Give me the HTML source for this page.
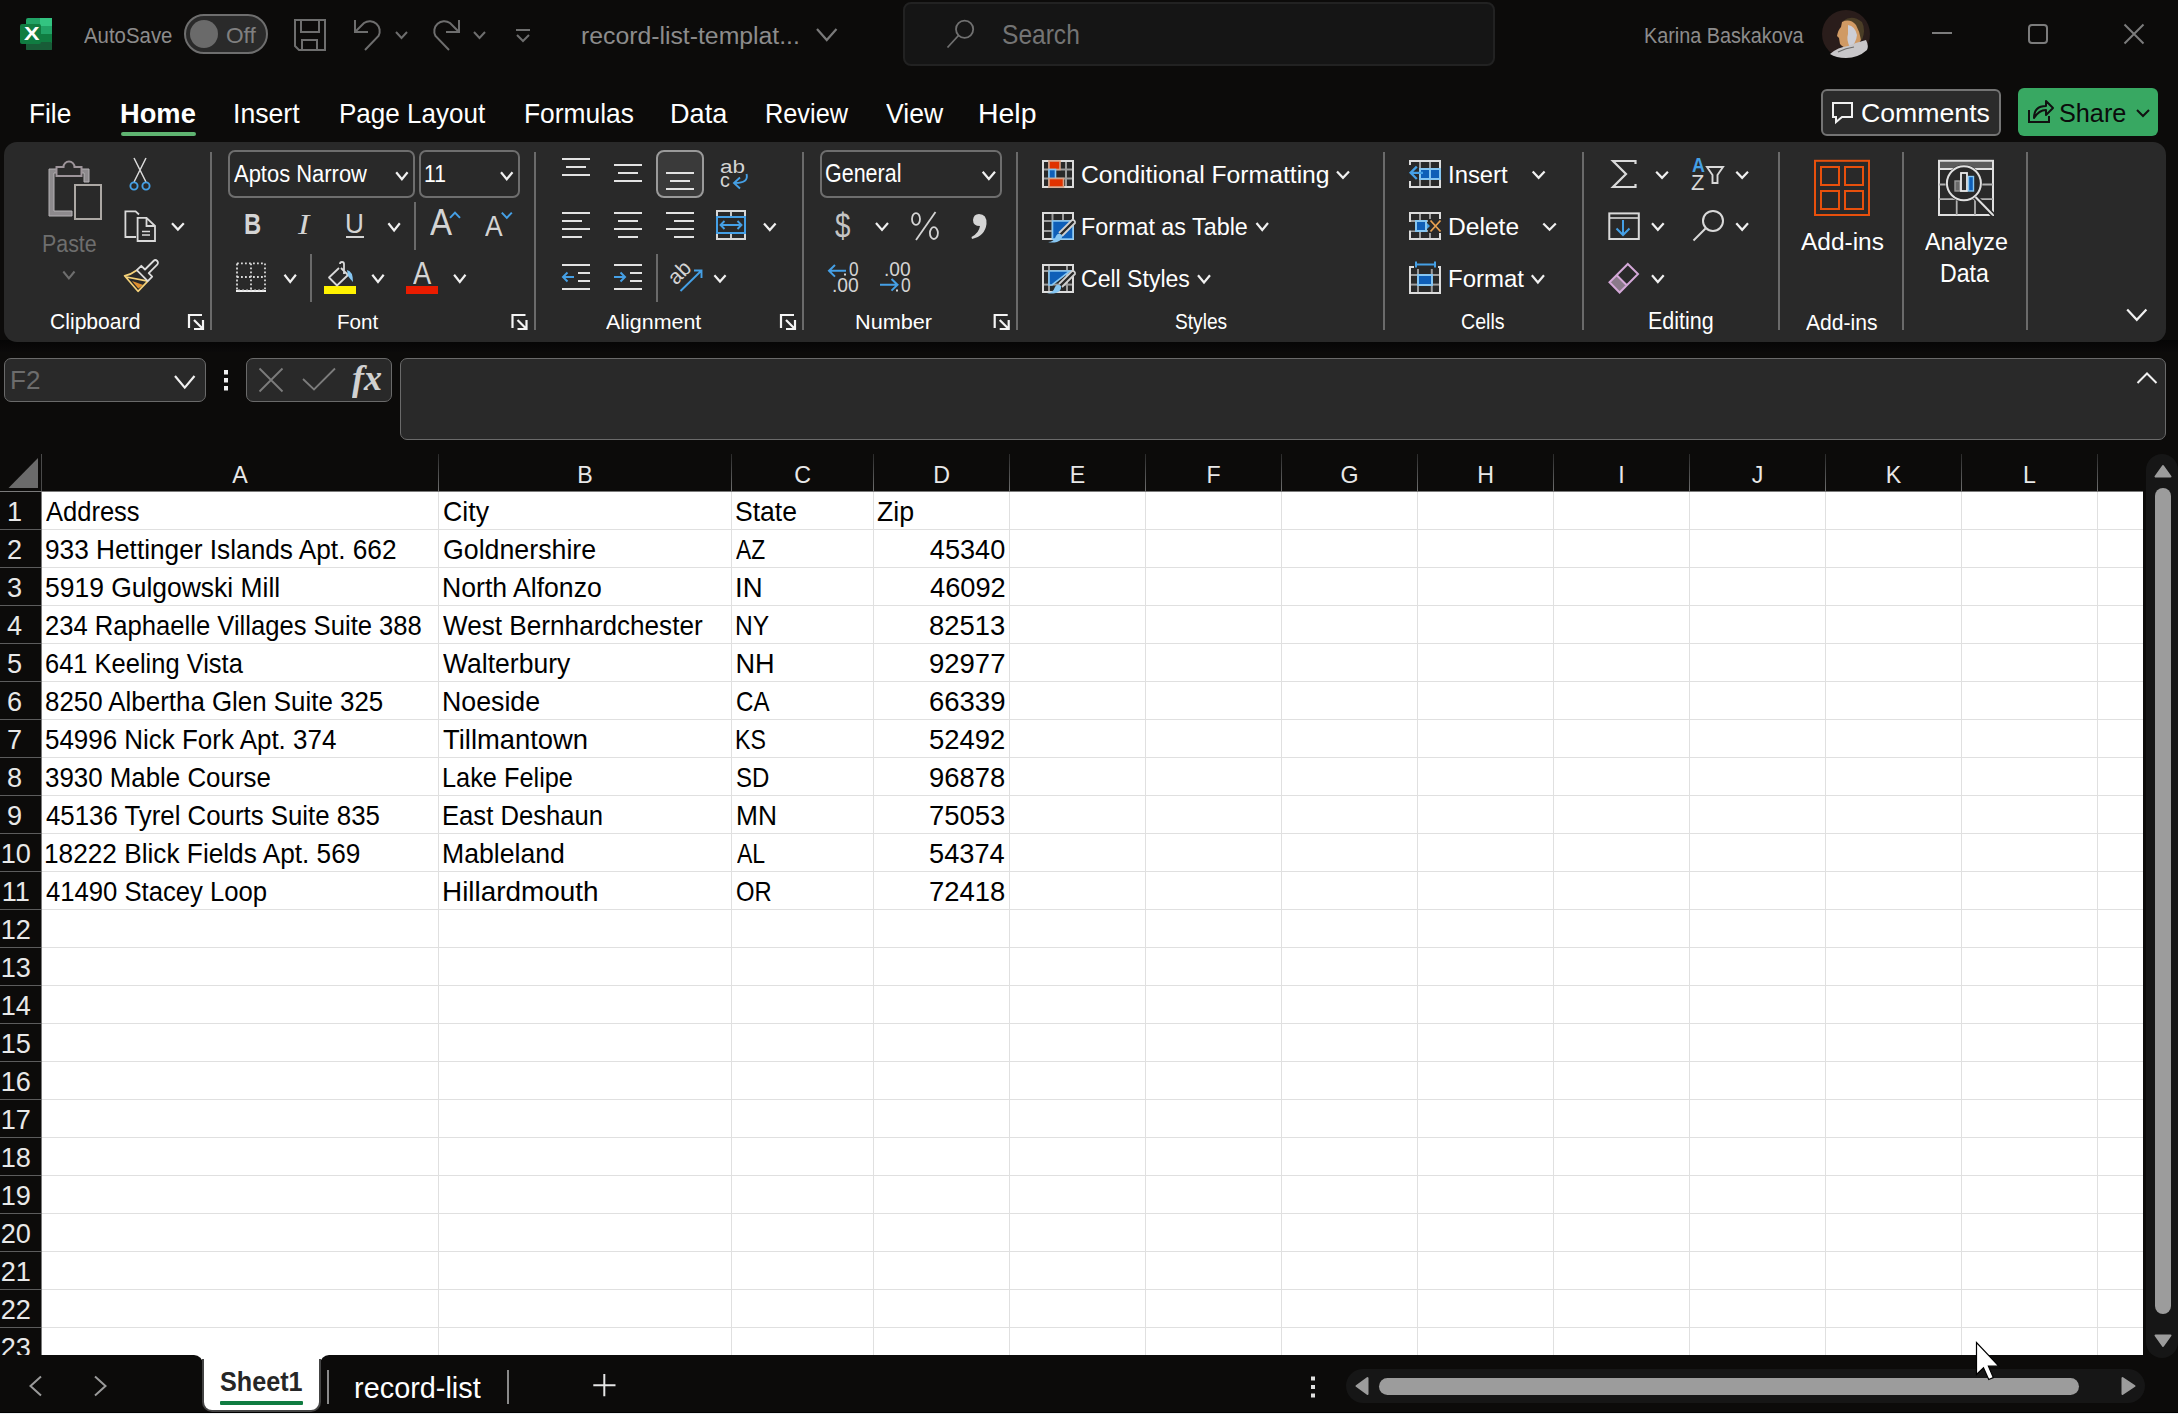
<!DOCTYPE html>
<html><head><meta charset="utf-8"><style>
html,body{margin:0;padding:0;}
body{width:2178px;height:1414px;overflow:hidden;position:relative;background:#0c0b0a;font-family:"Liberation Sans",sans-serif;}
.r{position:absolute;}
.t{position:absolute;white-space:nowrap;transform-origin:0 0;}
</style></head><body>
<div class="r" style="left:903px;top:2px;width:592px;height:64px;background:#151515;border:2px solid #222222;box-sizing:border-box;border-radius:8px;"></div>
<div class="r" style="left:121px;top:132px;width:75px;height:4px;background:#5fb471;border-radius:2px;"></div>
<div class="r" style="left:1821px;top:89px;width:180px;height:47px;background:#2b2b2b;border:2px solid #747474;box-sizing:border-box;border-radius:6px;"></div>
<div class="r" style="left:2018px;top:88px;width:140px;height:48px;background:#38a862;border-radius:6px;"></div>
<div class="r" style="left:0px;top:340px;width:2178px;height:12px;background:linear-gradient(#050505,#0b0a0a);"></div>
<div class="r" style="left:4px;top:142px;width:2162px;height:200px;background:#292929;border-radius:13px;"></div>
<div class="r" style="left:210px;top:152px;width:2px;height:178px;background:#6a6a6a;"></div>
<div class="r" style="left:228px;top:150px;width:187px;height:48px;background:#292929;border:2px solid #6e6e6e;box-sizing:border-box;border-radius:7px;"></div>
<div class="r" style="left:419px;top:150px;width:101px;height:48px;background:#292929;border:2px solid #6e6e6e;box-sizing:border-box;border-radius:7px;"></div>
<div class="r" style="left:346px;top:236px;width:18px;height:2.2px;background:#d4d4d4;"></div>
<div class="r" style="left:414px;top:202px;width:2px;height:48px;background:#6a6a6a;"></div>
<div class="r" style="left:236px;top:289.6px;width:30px;height:2.4px;background:#f0f0f0;"></div>
<div class="r" style="left:310px;top:254px;width:2px;height:48px;background:#6a6a6a;"></div>
<div class="r" style="left:324px;top:286px;width:32px;height:8px;background:#fff200;"></div>
<div class="r" style="left:406px;top:286px;width:32px;height:8px;background:#ea1c00;"></div>
<div class="r" style="left:534px;top:152px;width:2px;height:178px;background:#6a6a6a;"></div>
<div class="r" style="left:562px;top:157.9px;width:28px;height:2.2px;background:#e2e2e2;"></div>
<div class="r" style="left:566px;top:165.9px;width:20px;height:2.2px;background:#e2e2e2;"></div>
<div class="r" style="left:562px;top:173.9px;width:28px;height:2.2px;background:#e2e2e2;"></div>
<div class="r" style="left:614px;top:163.9px;width:28px;height:2.2px;background:#e2e2e2;"></div>
<div class="r" style="left:618px;top:171.9px;width:20px;height:2.2px;background:#e2e2e2;"></div>
<div class="r" style="left:614px;top:179.9px;width:28px;height:2.2px;background:#e2e2e2;"></div>
<div class="r" style="left:656px;top:150px;width:48px;height:48px;background:#3a3a3a;border:2px solid #9a9a9a;box-sizing:border-box;border-radius:8px;"></div>
<div class="r" style="left:666px;top:171.9px;width:28px;height:2.2px;background:#e2e2e2;"></div>
<div class="r" style="left:670px;top:179.9px;width:20px;height:2.2px;background:#e2e2e2;"></div>
<div class="r" style="left:666px;top:187.9px;width:28px;height:2.2px;background:#e2e2e2;"></div>
<div class="r" style="left:562px;top:211.9px;width:28px;height:2.2px;background:#e2e2e2;"></div>
<div class="r" style="left:562px;top:219.9px;width:20px;height:2.2px;background:#e2e2e2;"></div>
<div class="r" style="left:562px;top:227.9px;width:28px;height:2.2px;background:#e2e2e2;"></div>
<div class="r" style="left:562px;top:235.9px;width:20px;height:2.2px;background:#e2e2e2;"></div>
<div class="r" style="left:614px;top:211.9px;width:28px;height:2.2px;background:#e2e2e2;"></div>
<div class="r" style="left:618px;top:219.9px;width:20px;height:2.2px;background:#e2e2e2;"></div>
<div class="r" style="left:614px;top:227.9px;width:28px;height:2.2px;background:#e2e2e2;"></div>
<div class="r" style="left:618px;top:235.9px;width:20px;height:2.2px;background:#e2e2e2;"></div>
<div class="r" style="left:666px;top:211.9px;width:28px;height:2.2px;background:#e2e2e2;"></div>
<div class="r" style="left:674px;top:219.9px;width:20px;height:2.2px;background:#e2e2e2;"></div>
<div class="r" style="left:666px;top:227.9px;width:28px;height:2.2px;background:#e2e2e2;"></div>
<div class="r" style="left:674px;top:235.9px;width:20px;height:2.2px;background:#e2e2e2;"></div>
<div class="r" style="left:562px;top:263.9px;width:28px;height:2.2px;background:#e2e2e2;"></div>
<div class="r" style="left:578px;top:271.9px;width:12px;height:2.2px;background:#e2e2e2;"></div>
<div class="r" style="left:578px;top:279.9px;width:12px;height:2.2px;background:#e2e2e2;"></div>
<div class="r" style="left:562px;top:287.9px;width:28px;height:2.2px;background:#e2e2e2;"></div>
<div class="r" style="left:614px;top:263.9px;width:28px;height:2.2px;background:#e2e2e2;"></div>
<div class="r" style="left:630px;top:271.9px;width:12px;height:2.2px;background:#e2e2e2;"></div>
<div class="r" style="left:630px;top:279.9px;width:12px;height:2.2px;background:#e2e2e2;"></div>
<div class="r" style="left:614px;top:287.9px;width:28px;height:2.2px;background:#e2e2e2;"></div>
<div class="r" style="left:656px;top:254px;width:2px;height:48px;background:#6a6a6a;"></div>
<div class="r" style="left:802px;top:152px;width:2px;height:178px;background:#6a6a6a;"></div>
<div class="r" style="left:820px;top:150px;width:182px;height:48px;background:#292929;border:2px solid #6e6e6e;box-sizing:border-box;border-radius:7px;"></div>
<div class="r" style="left:1016px;top:152px;width:2px;height:178px;background:#6a6a6a;"></div>
<div class="r" style="left:1383px;top:152px;width:2px;height:178px;background:#6a6a6a;"></div>
<div class="r" style="left:1582px;top:152px;width:2px;height:178px;background:#6a6a6a;"></div>
<div class="r" style="left:1778px;top:152px;width:2px;height:178px;background:#6a6a6a;"></div>
<div class="r" style="left:1902px;top:152px;width:2px;height:178px;background:#6a6a6a;"></div>
<div class="r" style="left:2026px;top:152px;width:2px;height:178px;background:#6a6a6a;"></div>
<div class="r" style="left:4px;top:358px;width:202px;height:44px;background:#292929;border:1px solid #6a6a6a;box-sizing:border-box;border-radius:7px;"></div>
<div class="r" style="left:246px;top:358px;width:146px;height:44px;background:#292929;border:1px solid #6a6a6a;box-sizing:border-box;border-radius:7px;"></div>
<div class="r" style="left:400px;top:358px;width:1766px;height:82px;background:#292929;border:1px solid #6a6a6a;box-sizing:border-box;border-radius:7px;"></div>
<div class="r" style="left:42px;top:492px;width:2101px;height:863px;background:#ffffff;"></div>
<div class="r" style="left:438px;top:454px;width:1px;height:37px;background:linear-gradient(#2a2a2a,#6e6e6e);"></div>
<div class="r" style="left:438px;top:492px;width:1px;height:863px;background:#e0e0e0;"></div>
<div class="r" style="left:731px;top:454px;width:1px;height:37px;background:linear-gradient(#2a2a2a,#6e6e6e);"></div>
<div class="r" style="left:731px;top:492px;width:1px;height:863px;background:#e0e0e0;"></div>
<div class="r" style="left:873px;top:454px;width:1px;height:37px;background:linear-gradient(#2a2a2a,#6e6e6e);"></div>
<div class="r" style="left:873px;top:492px;width:1px;height:863px;background:#e0e0e0;"></div>
<div class="r" style="left:1009px;top:454px;width:1px;height:37px;background:linear-gradient(#2a2a2a,#6e6e6e);"></div>
<div class="r" style="left:1009px;top:492px;width:1px;height:863px;background:#e0e0e0;"></div>
<div class="r" style="left:1145px;top:454px;width:1px;height:37px;background:linear-gradient(#2a2a2a,#6e6e6e);"></div>
<div class="r" style="left:1145px;top:492px;width:1px;height:863px;background:#e0e0e0;"></div>
<div class="r" style="left:1281px;top:454px;width:1px;height:37px;background:linear-gradient(#2a2a2a,#6e6e6e);"></div>
<div class="r" style="left:1281px;top:492px;width:1px;height:863px;background:#e0e0e0;"></div>
<div class="r" style="left:1417px;top:454px;width:1px;height:37px;background:linear-gradient(#2a2a2a,#6e6e6e);"></div>
<div class="r" style="left:1417px;top:492px;width:1px;height:863px;background:#e0e0e0;"></div>
<div class="r" style="left:1553px;top:454px;width:1px;height:37px;background:linear-gradient(#2a2a2a,#6e6e6e);"></div>
<div class="r" style="left:1553px;top:492px;width:1px;height:863px;background:#e0e0e0;"></div>
<div class="r" style="left:1689px;top:454px;width:1px;height:37px;background:linear-gradient(#2a2a2a,#6e6e6e);"></div>
<div class="r" style="left:1689px;top:492px;width:1px;height:863px;background:#e0e0e0;"></div>
<div class="r" style="left:1825px;top:454px;width:1px;height:37px;background:linear-gradient(#2a2a2a,#6e6e6e);"></div>
<div class="r" style="left:1825px;top:492px;width:1px;height:863px;background:#e0e0e0;"></div>
<div class="r" style="left:1961px;top:454px;width:1px;height:37px;background:linear-gradient(#2a2a2a,#6e6e6e);"></div>
<div class="r" style="left:1961px;top:492px;width:1px;height:863px;background:#e0e0e0;"></div>
<div class="r" style="left:2097px;top:454px;width:1px;height:37px;background:linear-gradient(#2a2a2a,#6e6e6e);"></div>
<div class="r" style="left:2097px;top:492px;width:1px;height:863px;background:#e0e0e0;"></div>
<div class="r" style="left:41px;top:454px;width:1px;height:37px;background:#4a4a4a;"></div>
<div class="r" style="left:41px;top:491px;width:1px;height:864px;background:#7a7a7a;"></div>
<div class="r" style="left:0px;top:491px;width:2143px;height:1px;background:#7a7a7a;"></div>
<div class="r" style="left:0px;top:529px;width:41px;height:1px;background:#5c5c5c;"></div>
<div class="r" style="left:42px;top:529px;width:2101px;height:1px;background:#e0e0e0;"></div>
<div class="r" style="left:0px;top:567px;width:41px;height:1px;background:#5c5c5c;"></div>
<div class="r" style="left:42px;top:567px;width:2101px;height:1px;background:#e0e0e0;"></div>
<div class="r" style="left:0px;top:605px;width:41px;height:1px;background:#5c5c5c;"></div>
<div class="r" style="left:42px;top:605px;width:2101px;height:1px;background:#e0e0e0;"></div>
<div class="r" style="left:0px;top:643px;width:41px;height:1px;background:#5c5c5c;"></div>
<div class="r" style="left:42px;top:643px;width:2101px;height:1px;background:#e0e0e0;"></div>
<div class="r" style="left:0px;top:681px;width:41px;height:1px;background:#5c5c5c;"></div>
<div class="r" style="left:42px;top:681px;width:2101px;height:1px;background:#e0e0e0;"></div>
<div class="r" style="left:0px;top:719px;width:41px;height:1px;background:#5c5c5c;"></div>
<div class="r" style="left:42px;top:719px;width:2101px;height:1px;background:#e0e0e0;"></div>
<div class="r" style="left:0px;top:757px;width:41px;height:1px;background:#5c5c5c;"></div>
<div class="r" style="left:42px;top:757px;width:2101px;height:1px;background:#e0e0e0;"></div>
<div class="r" style="left:0px;top:795px;width:41px;height:1px;background:#5c5c5c;"></div>
<div class="r" style="left:42px;top:795px;width:2101px;height:1px;background:#e0e0e0;"></div>
<div class="r" style="left:0px;top:833px;width:41px;height:1px;background:#5c5c5c;"></div>
<div class="r" style="left:42px;top:833px;width:2101px;height:1px;background:#e0e0e0;"></div>
<div class="r" style="left:0px;top:871px;width:41px;height:1px;background:#5c5c5c;"></div>
<div class="r" style="left:42px;top:871px;width:2101px;height:1px;background:#e0e0e0;"></div>
<div class="r" style="left:0px;top:909px;width:41px;height:1px;background:#5c5c5c;"></div>
<div class="r" style="left:42px;top:909px;width:2101px;height:1px;background:#e0e0e0;"></div>
<div class="r" style="left:0px;top:947px;width:41px;height:1px;background:#5c5c5c;"></div>
<div class="r" style="left:42px;top:947px;width:2101px;height:1px;background:#e0e0e0;"></div>
<div class="r" style="left:0px;top:985px;width:41px;height:1px;background:#5c5c5c;"></div>
<div class="r" style="left:42px;top:985px;width:2101px;height:1px;background:#e0e0e0;"></div>
<div class="r" style="left:0px;top:1023px;width:41px;height:1px;background:#5c5c5c;"></div>
<div class="r" style="left:42px;top:1023px;width:2101px;height:1px;background:#e0e0e0;"></div>
<div class="r" style="left:0px;top:1061px;width:41px;height:1px;background:#5c5c5c;"></div>
<div class="r" style="left:42px;top:1061px;width:2101px;height:1px;background:#e0e0e0;"></div>
<div class="r" style="left:0px;top:1099px;width:41px;height:1px;background:#5c5c5c;"></div>
<div class="r" style="left:42px;top:1099px;width:2101px;height:1px;background:#e0e0e0;"></div>
<div class="r" style="left:0px;top:1137px;width:41px;height:1px;background:#5c5c5c;"></div>
<div class="r" style="left:42px;top:1137px;width:2101px;height:1px;background:#e0e0e0;"></div>
<div class="r" style="left:0px;top:1175px;width:41px;height:1px;background:#5c5c5c;"></div>
<div class="r" style="left:42px;top:1175px;width:2101px;height:1px;background:#e0e0e0;"></div>
<div class="r" style="left:0px;top:1213px;width:41px;height:1px;background:#5c5c5c;"></div>
<div class="r" style="left:42px;top:1213px;width:2101px;height:1px;background:#e0e0e0;"></div>
<div class="r" style="left:0px;top:1251px;width:41px;height:1px;background:#5c5c5c;"></div>
<div class="r" style="left:42px;top:1251px;width:2101px;height:1px;background:#e0e0e0;"></div>
<div class="r" style="left:0px;top:1289px;width:41px;height:1px;background:#5c5c5c;"></div>
<div class="r" style="left:42px;top:1289px;width:2101px;height:1px;background:#e0e0e0;"></div>
<div class="r" style="left:0px;top:1327px;width:41px;height:1px;background:#5c5c5c;"></div>
<div class="r" style="left:42px;top:1327px;width:2101px;height:1px;background:#e0e0e0;"></div>
<div class="r" style="left:180px;top:1355px;width:160px;height:12px;background:#ffffff;"></div>
<div class="r" style="left:0px;top:1355px;width:203px;height:59px;background:#0c0b0a;border-radius:0 9px 0 0;"></div>
<div class="r" style="left:320px;top:1355px;width:1858px;height:59px;background:#0c0b0a;border-radius:9px 0 0 0;"></div>
<div class="r" style="left:2146px;top:454px;width:32px;height:904px;background:#161616;border-radius:16px;"></div>
<div class="r" style="left:2155px;top:488px;width:16px;height:826px;background:#9c9c9c;border-radius:8px;"></div>
<div class="r" style="left:202px;top:1359px;width:119px;height:53px;background:#ffffff;border-radius:0 0 10px 10px;border:2px solid #444444;border-top:none;box-sizing:border-box;"></div>
<div class="r" style="left:220px;top:1401px;width:83px;height:4px;background:#107c41;border-radius:1px;"></div>
<div class="r" style="left:327px;top:1370px;width:2px;height:34px;background:#8a8a8a;"></div>
<div class="r" style="left:507px;top:1370px;width:2px;height:34px;background:#8a8a8a;"></div>
<div class="r" style="left:1346px;top:1369px;width:799px;height:34px;background:#161616;border-radius:17px;"></div>
<div class="r" style="left:1379px;top:1378px;width:700px;height:17px;background:#9c9c9c;border-radius:8.5px;"></div>
<div class="r" style="left:0px;top:1412px;width:2178px;height:1px;background:#000000;"></div>
<div class="r" style="left:0px;top:1413px;width:2178px;height:1px;background:#eef1f3;"></div>
<svg class="r" style="left:0;top:0" width="2178" height="1414" viewBox="0 0 2178 1414">
<rect x="26" y="18" width="26" height="32" rx="2" fill="#21a366"/><rect x="40" y="18" width="12" height="8" fill="#33c481"/><rect x="26" y="34" width="26" height="8" fill="#107c41"/><rect x="26" y="42" width="26" height="8" rx="1" fill="#185c37"/><rect x="20" y="24" width="21" height="20" rx="2" fill="#107c41"/>
<rect x="185" y="15" width="82" height="38" rx="19" fill="#2a2a2a" stroke="#6e6e6e" stroke-width="2"/>
<circle cx="204" cy="34" r="14" fill="#6a6a6a"/>
<path d="M295,20 H325 V50 H299 L295,46 Z" fill="none" stroke="#6e6e6e" stroke-width="2"/><path d="M301,20 V32 H319 V20" fill="none" stroke="#6e6e6e" stroke-width="2"/><path d="M302,50 V40 H317 V50" fill="none" stroke="#6e6e6e" stroke-width="2"/>
<path d="M355,20 V32 H368" fill="none" stroke="#6e6e6e" stroke-width="2"/><path d="M356,31 L364,23 A10,10 0 0 1 378.5,36 L365,50" fill="none" stroke="#6e6e6e" stroke-width="2"/>
<polyline points="396,32 401.5,38 407,32" fill="none" stroke="#6e6e6e" stroke-width="2"/>
<path d="M459,20 V32 H446" fill="none" stroke="#6e6e6e" stroke-width="2"/><path d="M458,31 L450,23 A10,10 0 0 0 435.5,36 L449,50" fill="none" stroke="#6e6e6e" stroke-width="2"/>
<polyline points="474,32 479.5,38 485,32" fill="none" stroke="#6e6e6e" stroke-width="2"/>
<line x1="516" y1="30" x2="530" y2="30" stroke="#6e6e6e" stroke-width="2" stroke-linecap="butt"/>
<polyline points="517,35 523.0,41 529,35" fill="none" stroke="#6e6e6e" stroke-width="2"/>
<polyline points="817,29 826.75,40 836.5,29" fill="none" stroke="#7a7a7a" stroke-width="2.2"/>
<circle cx="964.6" cy="29.2" r="8.6" fill="none" stroke="#707070" stroke-width="1.8"/><line x1="958.5" y1="35.5" x2="947.5" y2="47.5" stroke="#707070" stroke-width="1.8"/>
<circle cx="1846" cy="34" r="24" fill="#2a1d1b"/><path d="M1843,21 Q1852,14 1862,22 Q1866,30 1862,40 L1856,36 Q1855,26 1846,24 Z" fill="#4a3d26"/><path d="M1842,22 Q1850,18 1856,25 Q1860,32 1861,40 Q1858,46 1850,49 Q1843,48 1840,44 L1839,38 L1837,36 Q1838,30 1841,27 Z" fill="#d09a64"/><path d="M1848,25 Q1855,26 1857,35 Q1856,44 1850,47 Q1846,40 1848,34 Z" fill="#cdced6"/><path d="M1830,54 Q1838,47 1848,46 Q1858,42 1866,40 Q1869,46 1867,50 Q1858,58 1846,58 Q1836,58 1830,54 Z" fill="#c9c7c9"/><path d="M1838,52 Q1846,48 1854,47" fill="none" stroke="#6a6a6a" stroke-width="1.2"/>
<line x1="1932" y1="33" x2="1952" y2="33" stroke="#7c7c7c" stroke-width="2" stroke-linecap="butt"/>
<rect x="2029" y="25" width="18" height="18" rx="3" fill="none" stroke="#7c7c7c" stroke-width="2"/>
<path d="M2124.5,24.5 L2143.5,43.5 M2143.5,24.5 L2124.5,43.5" stroke="#7c7c7c" stroke-width="2"/>
<path d="M1833,103 H1852 V117 H1842 L1836,122 V117 H1833 Z" fill="none" stroke="#f0f0f0" stroke-width="2" stroke-linejoin="miter"/>
<path d="M2029,110 V122 H2049 V116" fill="none" stroke="#111" stroke-width="2"/><path d="M2034,118 Q2034,106 2046,106 V101 L2053,108 L2046,115 V110 Q2039,110 2034,118 Z" fill="none" stroke="#111" stroke-width="2" stroke-linejoin="round"/>
<polyline points="2137,110 2143.0,116 2149,110" fill="none" stroke="#111" stroke-width="2"/>
<path d="M49,169 H57 V176 H81 V169 H89 V182 H84 V173 H54 V211 H72 V216 H49 Z" fill="#8d8a8d" stroke="#b4b1b4" stroke-width="1"/>
<path d="M56.5,176 V167 H63.5 A5.5,5.5 0 0 1 74.5,167 H81.5 V176 Z" fill="#2b2b2b" stroke="#9d949a" stroke-width="2"/>
<rect x="75" y="185" width="26" height="34" fill="none" stroke="#aca8a4" stroke-width="2"/>
<polyline points="63.3,271.5 68.9,278.4 74.5,271.5" fill="none" stroke="#6e6e6e" stroke-width="2"/>
<path d="M134,158 L146,182 M146,158 L134,182" stroke="#d9d9d9" stroke-width="1.5"/>
<circle cx="134" cy="186" r="3.6" fill="#292929" stroke="#45a0e6" stroke-width="1.9"/><circle cx="146" cy="186" r="3.6" fill="#292929" stroke="#45a0e6" stroke-width="1.9"/>
<path d="M136,237 H125.4 V211.4 H135.6 L139,214.5" fill="none" stroke="#d9d9d9" stroke-width="1.8"/>
<path d="M137.6,217.8 H146.5 L155,226 V241 H137.6 Z M146.5,217.8 V226 H155" fill="none" stroke="#d9d9d9" stroke-width="1.8"/>
<path d="M142,231.5 H150 M142,235 H150" stroke="#d9d9d9" stroke-width="1.4"/>
<polyline points="172,223.2 177.9,229.6 183.8,223.2" fill="none" stroke="#f0f0f0" stroke-width="2.2"/>
<path d="M132,281 L143.3,285 L138.3,288.5 Z" fill="#e09030"/>
<path d="M136.8,270.2 Q131,274.5 124.6,275.8 L138,291.3 L147.8,281.2 M126.5,277 L147.8,281.2" fill="none" stroke="#f5d27a" stroke-width="1.7" stroke-linejoin="round"/>
<path d="M136.8,270.2 L141.3,265.8 L145,269.5 L153.5,261 A2.6,2.6 0 0 1 157.2,264.7 L148.7,273.2 L152.2,276.7 L147.8,281.2 Z" fill="#292929" stroke="#dcdcdc" stroke-width="1.8" stroke-linejoin="round"/>
<path d="M189,328 V315 H202" fill="none" stroke="#f4f4f4" stroke-width="2.2"/>
<path d="M194,320 L202,328 M203,320 V329 H194" fill="none" stroke="#f4f4f4" stroke-width="2.2"/>
<polyline points="396.2,172.3 401.9,179.2 407.6,172.3" fill="none" stroke="#f0f0f0" stroke-width="2.2"/>
<polyline points="501,172.3 506.75,179.2 512.5,172.3" fill="none" stroke="#f0f0f0" stroke-width="2.2"/>
<polyline points="388.4,223.3 394.1,230.4 399.8,223.3" fill="none" stroke="#f0f0f0" stroke-width="2.2"/>
<polyline points="450,217.9 455.0,212.6 460,217.9" fill="none" stroke="#45a0e6" stroke-width="2"/>
<polyline points="501.8,212.6 506.8,217.9 511.8,212.6" fill="none" stroke="#45a0e6" stroke-width="2"/>
<rect x="237" y="263.4" width="28" height="27" fill="none" stroke="#d9d9d9" stroke-width="1.8" stroke-dasharray="1.8,2.2"/>
<line x1="251" y1="263.4" x2="251" y2="290" stroke="#d9d9d9" stroke-width="1.8" stroke-dasharray="1.8,2.2"/><line x1="237" y1="277" x2="265" y2="277" stroke="#d9d9d9" stroke-width="1.8" stroke-dasharray="1.8,2.2"/>
<polyline points="284.5,274.8 290.2,282 295.9,274.8" fill="none" stroke="#f0f0f0" stroke-width="2.2"/>
<path d="M340,264 A2,2 0 0 1 344,264 V274 M339,268 L329,277.5 L337,285.5 L348,275 L341,268" fill="none" stroke="#d9d9d9" stroke-width="1.8" stroke-linejoin="round"/>
<path d="M347,270 Q353,271 353,282 Q350,279 348,276 Z" fill="#86c6f2"/>
<polyline points="372.3,274.8 378.0,282 383.7,274.8" fill="none" stroke="#f0f0f0" stroke-width="2.2"/>
<polyline points="454.1,274.8 459.8,282 465.5,274.8" fill="none" stroke="#f0f0f0" stroke-width="2.2"/>
<path d="M512.5,328 V315 H525.5" fill="none" stroke="#f4f4f4" stroke-width="2.2"/>
<path d="M517.5,320 L525.5,328 M526.5,320 V329 H517.5" fill="none" stroke="#f4f4f4" stroke-width="2.2"/>
<path d="M746.5,174 Q749,183 735,183 M740,177.5 L734,183 L740,188.5" fill="none" stroke="#45a0e6" stroke-width="1.9"/>
<rect x="717" y="211" width="28" height="28" fill="none" stroke="#d9d9d9" stroke-width="2"/><line x1="731" y1="211" x2="731" y2="217" stroke="#d9d9d9" stroke-width="1.8"/><line x1="731" y1="233" x2="731" y2="239" stroke="#d9d9d9" stroke-width="1.8"/><rect x="717" y="217" width="28" height="16" fill="#292929" stroke="#45a0e6" stroke-width="2"/><path d="M720.5,225 H741.5 M724.5,221 L720.5,225 L724.5,229 M737.5,221 L741.5,225 L737.5,229" fill="none" stroke="#45a0e6" stroke-width="1.9"/>
<polyline points="764,223.4 769.8,230 775.6,223.4" fill="none" stroke="#f0f0f0" stroke-width="2.2"/>
<path d="M574,277 H563.5 M567.5,272.5 L563,277 L567.5,281.5" fill="none" stroke="#45a0e6" stroke-width="2"/>
<path d="M614,277 H624.5 M620.5,272.5 L625,277 L620.5,281.5" fill="none" stroke="#45a0e6" stroke-width="2"/>
<path d="M680.5,291 L701.5,270.5 M694,270.5 H701.5 V278" fill="none" stroke="#45a0e6" stroke-width="1.9"/>
<polyline points="714.4,275.3 720.0,281.6 725.6,275.3" fill="none" stroke="#f0f0f0" stroke-width="2.2"/>
<path d="M781,328 V315 H794" fill="none" stroke="#f4f4f4" stroke-width="2.2"/>
<path d="M786,320 L794,328 M795,320 V329 H786" fill="none" stroke="#f4f4f4" stroke-width="2.2"/>
<polyline points="982.7,171.7 988.85,179 995,171.7" fill="none" stroke="#f0f0f0" stroke-width="2.2"/>
<polyline points="876,223 882.0,229.9 888,223" fill="none" stroke="#f0f0f0" stroke-width="2.2"/>
<ellipse cx="916" cy="219" rx="4" ry="5.9" fill="none" stroke="#d4d4d4" stroke-width="1.8"/><ellipse cx="933.9" cy="233.1" rx="4" ry="5.9" fill="none" stroke="#d4d4d4" stroke-width="1.8"/><line x1="935.5" y1="212" x2="916" y2="240" stroke="#d4d4d4" stroke-width="1.8"/>
<path d="M979,214 Q987,214 986.5,224 Q985,236 972,239 L971.5,237 Q979,233 980,226 Q973,226 973,220 Q973.5,214 979,214 Z" fill="#d4d4d4"/>
<path d="M846,270.8 H829.5 M835,265 L829,270.8 L835,276.6" fill="none" stroke="#45a0e6" stroke-width="2"/>
<rect x="844" y="273.5" width="2" height="2" fill="#d4d4d4"/>
<path d="M880,284.8 H897 M891.5,279 L897.5,284.8 L891.5,290.6" fill="none" stroke="#45a0e6" stroke-width="2"/>
<rect x="896" y="289.5" width="2" height="2" fill="#d4d4d4"/>
<path d="M994.7,328 V315 H1007.7" fill="none" stroke="#f4f4f4" stroke-width="2.2"/>
<path d="M999.7,320 L1007.7,328 M1008.7,320 V329 H999.7" fill="none" stroke="#f4f4f4" stroke-width="2.2"/>
<line x1="1049" y1="161" x2="1049" y2="187" stroke="#9c9c9c" stroke-width="2"/>
<line x1="1066" y1="161" x2="1066" y2="187" stroke="#9c9c9c" stroke-width="2"/>
<line x1="1043" y1="169.5" x2="1073" y2="169.5" stroke="#9c9c9c" stroke-width="2"/>
<line x1="1043" y1="178.5" x2="1073" y2="178.5" stroke="#9c9c9c" stroke-width="2"/>
<rect x="1043" y="161" width="30" height="26" fill="none" stroke="#dcdcdc" stroke-width="2"/>
<rect x="1049" y="161" width="11" height="8.5" fill="#e03200" stroke="#d8a184" stroke-width="1.6"/><rect x="1049" y="169.5" width="6.5" height="9" fill="#0f5fb8" stroke="#86c6f2" stroke-width="1.6"/><rect x="1049" y="178.5" width="14.5" height="8.5" fill="#e03200" stroke="#d8a184" stroke-width="1.6"/>
<polyline points="1337,171.4 1343.0,177.8 1349,171.4" fill="none" stroke="#f0f0f0" stroke-width="2.2"/>
<line x1="1052.5" y1="213" x2="1052.5" y2="239" stroke="#9c9c9c" stroke-width="2"/>
<line x1="1063" y1="213" x2="1063" y2="239" stroke="#9c9c9c" stroke-width="2"/>
<line x1="1043" y1="221" x2="1073" y2="221" stroke="#9c9c9c" stroke-width="2"/>
<line x1="1043" y1="231" x2="1073" y2="231" stroke="#9c9c9c" stroke-width="2"/>
<rect x="1043" y="213" width="30" height="26" fill="none" stroke="#dcdcdc" stroke-width="2"/>
<path d="M1052.5,221 H1073 V239 H1052.5 Z" fill="#0f5fb8" stroke="#86c6f2" stroke-width="1.6"/>
<path d="M1059,233 L1072,220 A2.5,2.5 0 0 1 1075,223 L1062,236" fill="#292929" stroke="#cfcfcf" stroke-width="1.8"/>
<path d="M1048,242 Q1054,242 1056,236 Q1058,232 1062,235 Q1063,240 1057,242 Q1052,243 1048,242 Z" fill="#86c6f2"/>
<polyline points="1256.5,223 1262.25,230 1268,223" fill="none" stroke="#f0f0f0" stroke-width="2.2"/>
<line x1="1049" y1="265" x2="1049" y2="292" stroke="#9c9c9c" stroke-width="2"/>
<line x1="1067" y1="265" x2="1067" y2="292" stroke="#9c9c9c" stroke-width="2"/>
<line x1="1043" y1="271" x2="1073" y2="271" stroke="#9c9c9c" stroke-width="2"/>
<line x1="1043" y1="284.6" x2="1073" y2="284.6" stroke="#9c9c9c" stroke-width="2"/>
<rect x="1043" y="265" width="30" height="27" fill="none" stroke="#dcdcdc" stroke-width="2"/>
<path d="M1049,271 H1070 L1052,285 H1049 Z" fill="#0f5fb8" stroke="#86c6f2" stroke-width="1.6"/>
<path d="M1059,284 L1072,271 A2.5,2.5 0 0 1 1075,274 L1062,287" fill="#292929" stroke="#cfcfcf" stroke-width="1.8"/>
<path d="M1047,293 Q1053,293 1055,287 Q1057,283 1061,286 Q1062,291 1056,293 Q1051,294 1047,293 Z" fill="#86c6f2"/>
<polyline points="1198,275.3 1204.0,282.5 1210,275.3" fill="none" stroke="#f0f0f0" stroke-width="2.2"/>
<line x1="1420" y1="161" x2="1420" y2="187" stroke="#9c9c9c" stroke-width="2"/>
<line x1="1430" y1="161" x2="1430" y2="187" stroke="#9c9c9c" stroke-width="2"/>
<line x1="1410" y1="169" x2="1440" y2="169" stroke="#9c9c9c" stroke-width="2"/>
<line x1="1410" y1="178" x2="1440" y2="178" stroke="#9c9c9c" stroke-width="2"/>
<rect x="1410" y="161" width="30" height="26" fill="none" stroke="#dcdcdc" stroke-width="2"/>
<rect x="1420" y="169" width="20" height="10" fill="#0f5fb8" stroke="#86c6f2" stroke-width="2"/><line x1="1430" y1="169" x2="1430" y2="179" stroke="#86c6f2" stroke-width="2"/><rect x="1407.5" y="165" width="11.5" height="16" fill="#292929"/><path d="M1423,172.8 H1411 M1416.8,166.6 L1410.6,172.8 L1416.8,179" fill="none" stroke="#45a0e6" stroke-width="2.3"/>
<polyline points="1532.7,171.4 1538.65,177.8 1544.6,171.4" fill="none" stroke="#f0f0f0" stroke-width="2.2"/>
<line x1="1420" y1="213" x2="1420" y2="239" stroke="#9c9c9c" stroke-width="2"/>
<line x1="1430" y1="213" x2="1430" y2="239" stroke="#9c9c9c" stroke-width="2"/>
<line x1="1410" y1="221" x2="1440" y2="221" stroke="#9c9c9c" stroke-width="2"/>
<line x1="1410" y1="231" x2="1440" y2="231" stroke="#9c9c9c" stroke-width="2"/>
<rect x="1410" y="213" width="30" height="26" fill="none" stroke="#dcdcdc" stroke-width="2"/>
<rect x="1428" y="219" width="14" height="14" fill="#292929"/><rect x="1407" y="222" width="8" height="8.5" fill="#292929"/><rect x="1416" y="221" width="10" height="10" fill="#0f5fb8" stroke="#86c6f2" stroke-width="2"/><path d="M1427,223 L1430,226 L1427,229 Z" fill="#45a0e6"/><path d="M1430.5,220.5 L1440.5,231.5 M1440.5,220.5 L1430.5,231.5" stroke="#e8a050" stroke-width="1.8"/>
<polyline points="1543.3,223.4 1549.55,229.8 1555.8,223.4" fill="none" stroke="#f0f0f0" stroke-width="2.2"/>
<line x1="1418" y1="267" x2="1418" y2="293" stroke="#9c9c9c" stroke-width="2"/>
<line x1="1431.8" y1="267" x2="1431.8" y2="293" stroke="#9c9c9c" stroke-width="2"/>
<line x1="1410" y1="275" x2="1440" y2="275" stroke="#9c9c9c" stroke-width="2"/>
<line x1="1410" y1="284.6" x2="1440" y2="284.6" stroke="#9c9c9c" stroke-width="2"/>
<rect x="1410" y="267" width="30" height="26" fill="none" stroke="#dcdcdc" stroke-width="2"/>
<rect x="1414" y="262" width="24" height="7" fill="#292929"/><path d="M1416,264.5 H1435 M1416,261.5 V267.5 M1435,261.5 V267.5" fill="none" stroke="#45a0e6" stroke-width="2"/><rect x="1418" y="275" width="14" height="10" fill="#0f5fb8" stroke="#86c6f2" stroke-width="2"/>
<polyline points="1531.8,275.3 1537.9,282.5 1544,275.3" fill="none" stroke="#f0f0f0" stroke-width="2.2"/>
<path d="M1635.5,164 V161 H1613 L1626,174 L1613,187 H1635.5 V184" fill="none" stroke="#d9d9d9" stroke-width="2.2"/>
<polyline points="1656.2,171.8 1662.0500000000002,177.8 1667.9,171.8" fill="none" stroke="#f0f0f0" stroke-width="2.2"/>
<path d="M1707,167 H1723 L1717.5,175 V183 H1712.5 V175 Z" fill="none" stroke="#d9d9d9" stroke-width="1.9" stroke-linejoin="miter"/>
<polyline points="1736.3,171.8 1742.15,177.8 1748,171.8" fill="none" stroke="#f0f0f0" stroke-width="2.2"/>
<rect x="1609.3" y="213.4" width="29.5" height="25.6" fill="none" stroke="#d9d9d9" stroke-width="2"/><line x1="1609.3" y1="218" x2="1638.8" y2="218" stroke="#d9d9d9" stroke-width="1.6"/><path d="M1623,220 V235 M1616.5,228.5 L1623,235 L1629.5,228.5" fill="none" stroke="#45a0e6" stroke-width="2"/>
<polyline points="1652,223.2 1657.85,229.8 1663.7,223.2" fill="none" stroke="#f0f0f0" stroke-width="2.2"/>
<circle cx="1713" cy="220.9" r="10" fill="none" stroke="#d9d9d9" stroke-width="2"/><line x1="1705.5" y1="228.5" x2="1693.5" y2="240.5" stroke="#d9d9d9" stroke-width="2"/>
<polyline points="1736.3,223.2 1742.15,229.8 1748,223.2" fill="none" stroke="#f0f0f0" stroke-width="2.2"/>
<path d="M1617,275.5 L1626,285 L1619.5,292 L1609.5,282 Z" fill="#8a7a8a"/><path d="M1627.8,264 L1638,274 L1619.6,292.5 L1609.5,282.3 Z M1617,275.5 L1626.5,285" fill="none" stroke="#d4a8d8" stroke-width="2"/>
<polyline points="1652,275.2 1657.85,282 1663.7,275.2" fill="none" stroke="#f0f0f0" stroke-width="2.2"/>
<rect x="1815" y="160.8" width="54" height="54.2" fill="none" stroke="#e8500c" stroke-width="2"/><rect x="1821" y="167" width="18" height="18" fill="none" stroke="#e8500c" stroke-width="2"/><rect x="1845" y="167" width="18" height="18" fill="none" stroke="#e8500c" stroke-width="2"/><rect x="1821" y="191" width="18" height="18" fill="none" stroke="#e8500c" stroke-width="2"/><rect x="1845" y="191" width="18" height="18" fill="none" stroke="#e8500c" stroke-width="2"/>
<rect x="1939" y="160.8" width="54" height="54.2" fill="none" stroke="#e0e0e0" stroke-width="2"/><rect x="1940" y="162" width="52" height="6" fill="#5c5c5c"/><line x1="1939" y1="169" x2="1993" y2="169" stroke="#e0e0e0" stroke-width="1.8"/><line x1="1939" y1="184.5" x2="1993" y2="184.5" stroke="#b0b0b0" stroke-width="1.8"/><line x1="1939" y1="199.2" x2="1993" y2="199.2" stroke="#b0b0b0" stroke-width="1.8"/><line x1="1956.7" y1="199" x2="1956.7" y2="215" stroke="#b0b0b0" stroke-width="1.8"/><line x1="1975" y1="199" x2="1975" y2="215" stroke="#b0b0b0" stroke-width="1.8"/><circle cx="1963.9" cy="183.3" r="18.5" fill="#292929"/><circle cx="1963.9" cy="183.3" r="17" fill="none" stroke="#e0e0e0" stroke-width="2"/><line x1="1975.5" y1="197" x2="1993" y2="215" stroke="#292929" stroke-width="5"/><line x1="1975.5" y1="197" x2="1993" y2="215" stroke="#e0e0e0" stroke-width="2"/><rect x="1955" y="181" width="5" height="10" fill="#6a6a6a" stroke="#9a9a9a" stroke-width="1.4"/><rect x="1961" y="173" width="6" height="18" fill="#2b2b2b" stroke="#ececec" stroke-width="1.8"/><rect x="1968.5" y="176.5" width="5" height="14.5" fill="#0f5fb8" stroke="#86c6f2" stroke-width="1.4"/>
<polyline points="2127.2,309.4 2136.8,319.8 2146.4,309.4" fill="none" stroke="#f0f0f0" stroke-width="2.2"/>
<polyline points="175,376 184.75,387.6 194.5,376" fill="none" stroke="#f0f0f0" stroke-width="2.2"/>
<rect x="224" y="370" width="4" height="4.5" fill="#f0f0f0"/><rect x="224" y="378" width="4" height="4.5" fill="#f0f0f0"/><rect x="224" y="386" width="4" height="4.5" fill="#f0f0f0"/>
<path d="M259.5,368.5 L282.5,391.5 M282.5,368.5 L259.5,391.5" stroke="#7c7c7c" stroke-width="1.8"/>
<polyline points="303,379 314,389.5 335,368.5" fill="none" stroke="#7c7c7c" stroke-width="1.8"/>
<polyline points="2137.5,383 2147,373.5 2156.5,383" fill="none" stroke="#f0f0f0" stroke-width="2"/>
<polygon points="8.5,488 38,488 38,458" fill="#6b6b6b"/>
<polygon points="2163,466 2155.5,476.5 2170.5,476.5" fill="#9c9c9c" stroke="#9c9c9c" stroke-width="2" stroke-linejoin="round"/><polygon points="2163,1346 2155.5,1335.5 2170.5,1335.5" fill="#9c9c9c" stroke="#9c9c9c" stroke-width="2" stroke-linejoin="round"/>
<polyline points="41,1376.5 30.5,1386 41,1395.5" fill="none" stroke="#9a9a9a" stroke-width="2"/><polyline points="95,1376.5 105.5,1386 95,1395.5" fill="none" stroke="#9a9a9a" stroke-width="2"/>
<path d="M604.3,1374 V1396.3 M593.3,1385.2 H615.5" stroke="#e6e6e6" stroke-width="2"/>
<rect x="1311" y="1376.5" width="4" height="4" fill="#e0e0e0"/><rect x="1311" y="1385" width="4" height="4" fill="#e0e0e0"/><rect x="1311" y="1393.5" width="4" height="4" fill="#e0e0e0"/>
<polygon points="1356.5,1386 1367.5,1378 1367.5,1394" fill="#9c9c9c" stroke="#9c9c9c" stroke-width="2" stroke-linejoin="round"/><polygon points="2134.5,1386 2122.5,1378 2122.5,1394" fill="#9c9c9c" stroke="#9c9c9c" stroke-width="2" stroke-linejoin="round"/>
<path d="M1976.5,1342.5 V1374.5 L1983.5,1367.8 L1988.7,1379.5 L1993.3,1377.6 L1988.4,1366.2 H1998.8 Z" fill="#ffffff" stroke="#000" stroke-width="1.2" stroke-linejoin="miter"/>
</svg>
<div class="t" style="left:23.77px;top:24.95px;font-size:18.41px;line-height:18.41px;color:#ffffff;font-weight:700;transform:scaleX(1.2635);">X</div>
<div class="t" style="left:84.00px;top:24.72px;font-size:22.46px;line-height:22.46px;color:#8c8c8c;transform:scaleX(0.9080);">AutoSave</div>
<div class="t" style="left:225.58px;top:24.72px;font-size:22.46px;line-height:22.46px;color:#808080;transform:scaleX(1.0090);">Off</div>
<div class="t" style="left:581.39px;top:23.54px;font-size:24.83px;line-height:24.83px;color:#8c8c8c;transform:scaleX(0.9977);">record-list-templat...</div>
<div class="t" style="left:1001.90px;top:21.04px;font-size:27.83px;line-height:27.83px;color:#747474;transform:scaleX(0.8823);">Search</div>
<div class="t" style="left:1644.42px;top:25.08px;font-size:21.74px;line-height:21.74px;color:#8c8c8c;transform:scaleX(0.9108);">Karina Baskakova</div>
<div class="t" style="left:28.90px;top:100.18px;font-size:27.54px;line-height:27.54px;color:#ffffff;transform:scaleX(0.9537);">File</div>
<div class="t" style="left:120.23px;top:100.18px;font-size:27.54px;line-height:27.54px;color:#ffffff;font-weight:700;transform:scaleX(0.9910);">Home</div>
<div class="t" style="left:232.60px;top:100.18px;font-size:27.54px;line-height:27.54px;color:#ffffff;transform:scaleX(0.9664);">Insert</div>
<div class="t" style="left:338.92px;top:100.18px;font-size:27.54px;line-height:27.54px;color:#ffffff;transform:scaleX(0.9457);">Page Layout</div>
<div class="t" style="left:523.89px;top:100.18px;font-size:27.54px;line-height:27.54px;color:#ffffff;transform:scaleX(0.9583);">Formulas</div>
<div class="t" style="left:669.83px;top:100.18px;font-size:27.54px;line-height:27.54px;color:#ffffff;transform:scaleX(0.9839);">Data</div>
<div class="t" style="left:764.98px;top:100.18px;font-size:27.54px;line-height:27.54px;color:#ffffff;transform:scaleX(0.9192);">Review</div>
<div class="t" style="left:885.87px;top:100.18px;font-size:27.54px;line-height:27.54px;color:#ffffff;transform:scaleX(0.9650);">View</div>
<div class="t" style="left:977.73px;top:100.18px;font-size:27.54px;line-height:27.54px;color:#ffffff;transform:scaleX(1.0322);">Help</div>
<div class="t" style="left:1861.37px;top:100.19px;font-size:26.52px;line-height:26.52px;color:#ffffff;transform:scaleX(1.0057);">Comments</div>
<div class="t" style="left:2058.86px;top:100.19px;font-size:26.52px;line-height:26.52px;color:#0b0b0b;transform:scaleX(0.9518);">Share</div>
<div class="t" style="left:41.99px;top:231.89px;font-size:23.91px;line-height:23.91px;color:#6e6e6e;transform:scaleX(0.8949);">Paste</div>
<div class="t" style="left:49.94px;top:310.94px;font-size:22.03px;line-height:22.03px;color:#ffffff;transform:scaleX(0.9591);">Clipboard</div>
<div class="t" style="left:233.50px;top:162.94px;font-size:23.62px;line-height:23.62px;color:#ffffff;transform:scaleX(0.9298);">Aptos Narrow</div>
<div class="t" style="left:424.12px;top:162.94px;font-size:23.62px;line-height:23.62px;color:#ffffff;transform:scaleX(0.8929);">11</div>
<div class="t" style="left:243.85px;top:209.96px;font-size:28.99px;line-height:28.99px;color:#d4d4d4;font-weight:700;transform:scaleX(0.8201);">B</div>
<div class="t" style="left:297.77px;top:209.96px;font-size:28.99px;line-height:28.99px;color:#d4d4d4;font-style:italic;font-family:'Liberation Serif', serif;transform:scaleX(1.1776);">I</div>
<div class="t" style="left:345.44px;top:210.24px;font-size:27.83px;line-height:27.83px;color:#d4d4d4;transform:scaleX(0.9394);">U</div>
<div class="t" style="left:430.00px;top:205.47px;font-size:36.96px;line-height:36.96px;color:#d4d4d4;transform:scaleX(0.8952);">A</div>
<div class="t" style="left:485.20px;top:212.10px;font-size:28.70px;line-height:28.70px;color:#d4d4d4;transform:scaleX(0.9223);">A</div>
<div class="t" style="left:413.20px;top:258.24px;font-size:31.01px;line-height:31.01px;color:#d4d4d4;transform:scaleX(0.8824);">A</div>
<div class="t" style="left:336.85px;top:311.66px;font-size:20.58px;line-height:20.58px;color:#ffffff;transform:scaleX(1.0023);">Font</div>
<div class="t" style="left:719.90px;top:159.12px;font-size:17.66px;line-height:17.66px;color:#d4d4d4;transform:scaleX(1.2758);">ab</div>
<div class="t" style="left:720.21px;top:170.17px;font-size:20.57px;line-height:20.57px;color:#d4d4d4;transform:scaleX(0.9613);">c</div>
<div class="t" style="left:669px;top:259px;font-size:21px;line-height:21px;color:#d4d4d4;transform:rotate(-45deg);transform-origin:14px 14px">ab</div>
<div class="t" style="left:605.80px;top:311.92px;font-size:20.87px;line-height:20.87px;color:#ffffff;transform:scaleX(1.0274);">Alignment</div>
<div class="t" style="left:824.63px;top:161.27px;font-size:25.36px;line-height:25.36px;color:#ffffff;transform:scaleX(0.8470);">General</div>
<div class="t" style="left:835.42px;top:207.68px;font-size:35.94px;line-height:35.94px;color:#c4c4c4;transform:scaleX(0.7717);">$</div>
<div class="t" style="left:849.21px;top:259.25px;font-size:20.00px;line-height:20.00px;color:#d4d4d4;transform:scaleX(0.8646);">0</div>
<div class="t" style="left:832.06px;top:275.35px;font-size:20.00px;line-height:20.00px;color:#d4d4d4;transform:scaleX(0.9644);">.00</div>
<div class="t" style="left:883.97px;top:259.31px;font-size:20.29px;line-height:20.29px;color:#d4d4d4;transform:scaleX(0.9468);">.00</div>
<div class="t" style="left:900.90px;top:275.35px;font-size:20.00px;line-height:20.00px;color:#d4d4d4;transform:scaleX(0.8750);">0</div>
<div class="t" style="left:855.27px;top:311.92px;font-size:20.87px;line-height:20.87px;color:#ffffff;transform:scaleX(1.0387);">Number</div>
<div class="t" style="left:1081.36px;top:163.18px;font-size:24.35px;line-height:24.35px;color:#ffffff;transform:scaleX(1.0151);">Conditional Formatting</div>
<div class="t" style="left:1081.13px;top:215.15px;font-size:24.20px;line-height:24.20px;color:#ffffff;transform:scaleX(0.9646);">Format as Table</div>
<div class="t" style="left:1081.45px;top:266.99px;font-size:23.91px;line-height:23.91px;color:#ffffff;transform:scaleX(0.9643);">Cell Styles</div>
<div class="t" style="left:1174.94px;top:311.37px;font-size:21.16px;line-height:21.16px;color:#ffffff;transform:scaleX(0.9041);">Styles</div>
<div class="t" style="left:1447.85px;top:163.18px;font-size:24.35px;line-height:24.35px;color:#ffffff;transform:scaleX(0.9802);">Insert</div>
<div class="t" style="left:1448.03px;top:215.18px;font-size:24.35px;line-height:24.35px;color:#ffffff;transform:scaleX(1.0101);">Delete</div>
<div class="t" style="left:1448.08px;top:266.99px;font-size:23.91px;line-height:23.91px;color:#ffffff;transform:scaleX(1.0034);">Format</div>
<div class="t" style="left:1461.02px;top:311.37px;font-size:21.16px;line-height:21.16px;color:#ffffff;transform:scaleX(0.9275);">Cells</div>
<div class="t" style="left:1691.55px;top:155.25px;font-size:20.00px;line-height:20.00px;color:#45a0e6;font-weight:700;transform:scaleX(0.8955);">A</div>
<div class="t" style="left:1691.35px;top:172.47px;font-size:21.16px;line-height:21.16px;color:#d9d9d9;transform:scaleX(1.0311);">Z</div>
<div class="t" style="left:1648.28px;top:309.49px;font-size:23.91px;line-height:23.91px;color:#ffffff;transform:scaleX(0.8996);">Editing</div>
<div class="t" style="left:1800.50px;top:229.87px;font-size:23.77px;line-height:23.77px;color:#ffffff;transform:scaleX(1.0296);">Add-ins</div>
<div class="t" style="left:1805.70px;top:310.57px;font-size:22.75px;line-height:22.75px;color:#ffffff;transform:scaleX(0.9274);">Add-ins</div>
<div class="t" style="left:1924.60px;top:229.87px;font-size:23.77px;line-height:23.77px;color:#ffffff;transform:scaleX(0.9805);">Analyze</div>
<div class="t" style="left:1940.15px;top:261.19px;font-size:24.93px;line-height:24.93px;color:#ffffff;transform:scaleX(0.9288);">Data</div>
<div class="t" style="left:9.91px;top:368.35px;font-size:25.80px;line-height:25.80px;color:#6c6c6c;transform:scaleX(1.0112);">F2</div>
<div class="t" style="left:351.80px;top:360.52px;font-size:35.86px;line-height:35.86px;color:#e0e0e0;font-weight:700;opacity:0.92;font-style:italic;font-family:'Liberation Serif', serif;transform:scaleX(1.0052);">fx</div>
<div class="t" style="left:200.0px;top:463.85px;width:80px;text-align:center;font-size:23.2px;line-height:23.2px;color:#e8e8e8">A</div>
<div class="t" style="left:545.0px;top:463.85px;width:80px;text-align:center;font-size:23.2px;line-height:23.2px;color:#e8e8e8">B</div>
<div class="t" style="left:762.5px;top:463.85px;width:80px;text-align:center;font-size:23.2px;line-height:23.2px;color:#e8e8e8">C</div>
<div class="t" style="left:901.5px;top:463.85px;width:80px;text-align:center;font-size:23.2px;line-height:23.2px;color:#e8e8e8">D</div>
<div class="t" style="left:1037.5px;top:463.85px;width:80px;text-align:center;font-size:23.2px;line-height:23.2px;color:#e8e8e8">E</div>
<div class="t" style="left:1173.5px;top:463.85px;width:80px;text-align:center;font-size:23.2px;line-height:23.2px;color:#e8e8e8">F</div>
<div class="t" style="left:1309.5px;top:463.85px;width:80px;text-align:center;font-size:23.2px;line-height:23.2px;color:#e8e8e8">G</div>
<div class="t" style="left:1445.5px;top:463.85px;width:80px;text-align:center;font-size:23.2px;line-height:23.2px;color:#e8e8e8">H</div>
<div class="t" style="left:1581.5px;top:463.85px;width:80px;text-align:center;font-size:23.2px;line-height:23.2px;color:#e8e8e8">I</div>
<div class="t" style="left:1717.5px;top:463.85px;width:80px;text-align:center;font-size:23.2px;line-height:23.2px;color:#e8e8e8">J</div>
<div class="t" style="left:1853.5px;top:463.85px;width:80px;text-align:center;font-size:23.2px;line-height:23.2px;color:#e8e8e8">K</div>
<div class="t" style="left:1989.5px;top:463.85px;width:80px;text-align:center;font-size:23.2px;line-height:23.2px;color:#e8e8e8">L</div>
<div class="r" style="left:0;top:492px;width:41px;height:863px;overflow:hidden">
<div class="t" style="left:-1.2px;top:6.40px;width:31.5px;text-align:center;font-size:27.1px;line-height:27.1px;color:#e8e8e8">1</div>
<div class="t" style="left:-1.2px;top:44.40px;width:31.5px;text-align:center;font-size:27.1px;line-height:27.1px;color:#e8e8e8">2</div>
<div class="t" style="left:-1.2px;top:82.40px;width:31.5px;text-align:center;font-size:27.1px;line-height:27.1px;color:#e8e8e8">3</div>
<div class="t" style="left:-1.2px;top:120.40px;width:31.5px;text-align:center;font-size:27.1px;line-height:27.1px;color:#e8e8e8">4</div>
<div class="t" style="left:-1.2px;top:158.40px;width:31.5px;text-align:center;font-size:27.1px;line-height:27.1px;color:#e8e8e8">5</div>
<div class="t" style="left:-1.2px;top:196.40px;width:31.5px;text-align:center;font-size:27.1px;line-height:27.1px;color:#e8e8e8">6</div>
<div class="t" style="left:-1.2px;top:234.40px;width:31.5px;text-align:center;font-size:27.1px;line-height:27.1px;color:#e8e8e8">7</div>
<div class="t" style="left:-1.2px;top:272.40px;width:31.5px;text-align:center;font-size:27.1px;line-height:27.1px;color:#e8e8e8">8</div>
<div class="t" style="left:-1.2px;top:310.40px;width:31.5px;text-align:center;font-size:27.1px;line-height:27.1px;color:#e8e8e8">9</div>
<div class="t" style="left:0px;top:348.40px;width:31.5px;text-align:center;font-size:27.1px;line-height:27.1px;color:#e8e8e8">10</div>
<div class="t" style="left:0px;top:386.40px;width:31.5px;text-align:center;font-size:27.1px;line-height:27.1px;color:#e8e8e8">11</div>
<div class="t" style="left:0px;top:424.40px;width:31.5px;text-align:center;font-size:27.1px;line-height:27.1px;color:#e8e8e8">12</div>
<div class="t" style="left:0px;top:462.40px;width:31.5px;text-align:center;font-size:27.1px;line-height:27.1px;color:#e8e8e8">13</div>
<div class="t" style="left:0px;top:500.40px;width:31.5px;text-align:center;font-size:27.1px;line-height:27.1px;color:#e8e8e8">14</div>
<div class="t" style="left:0px;top:538.40px;width:31.5px;text-align:center;font-size:27.1px;line-height:27.1px;color:#e8e8e8">15</div>
<div class="t" style="left:0px;top:576.40px;width:31.5px;text-align:center;font-size:27.1px;line-height:27.1px;color:#e8e8e8">16</div>
<div class="t" style="left:0px;top:614.40px;width:31.5px;text-align:center;font-size:27.1px;line-height:27.1px;color:#e8e8e8">17</div>
<div class="t" style="left:0px;top:652.40px;width:31.5px;text-align:center;font-size:27.1px;line-height:27.1px;color:#e8e8e8">18</div>
<div class="t" style="left:0px;top:690.40px;width:31.5px;text-align:center;font-size:27.1px;line-height:27.1px;color:#e8e8e8">19</div>
<div class="t" style="left:0px;top:728.40px;width:31.5px;text-align:center;font-size:27.1px;line-height:27.1px;color:#e8e8e8">20</div>
<div class="t" style="left:0px;top:766.40px;width:31.5px;text-align:center;font-size:27.1px;line-height:27.1px;color:#e8e8e8">21</div>
<div class="t" style="left:0px;top:804.40px;width:31.5px;text-align:center;font-size:27.1px;line-height:27.1px;color:#e8e8e8">22</div>
<div class="t" style="left:0px;top:842.40px;width:31.5px;text-align:center;font-size:27.1px;line-height:27.1px;color:#e8e8e8">23</div>
</div>
<div class="t" style="left:46.40px;top:498.40px;font-size:27.10px;line-height:27.10px;color:#000000;transform:scaleX(0.9421);">Address</div>
<div class="t" style="left:442.76px;top:498.40px;font-size:27.10px;line-height:27.10px;color:#000000;transform:scaleX(0.9855);">City</div>
<div class="t" style="left:735.41px;top:498.40px;font-size:27.10px;line-height:27.10px;color:#000000;transform:scaleX(0.9796);">State</div>
<div class="t" style="left:877.10px;top:498.40px;font-size:27.10px;line-height:27.10px;color:#000000;transform:scaleX(0.9868);">Zip</div>
<div class="t" style="left:45.22px;top:536.40px;font-size:27.10px;line-height:27.10px;color:#000000;transform:scaleX(0.9683);">933 Hettinger Islands Apt. 662</div>
<div class="t" style="left:442.66px;top:536.40px;font-size:27.10px;line-height:27.10px;color:#000000;transform:scaleX(0.9871);">Goldnershire</div>
<div class="t" style="left:736.20px;top:536.40px;font-size:27.10px;line-height:27.10px;color:#000000;transform:scaleX(0.8417);">AZ</div>
<div class="t" style="left:929.86px;top:536.40px;font-size:27.10px;line-height:27.10px;color:#000000;">45340</div>
<div class="t" style="left:45.34px;top:574.40px;font-size:27.10px;line-height:27.10px;color:#000000;transform:scaleX(0.9762);">5919 Gulgowski Mill</div>
<div class="t" style="left:442.37px;top:574.40px;font-size:27.10px;line-height:27.10px;color:#000000;transform:scaleX(0.9821);">North Alfonzo</div>
<div class="t" style="left:735.22px;top:574.40px;font-size:27.10px;line-height:27.10px;color:#000000;transform:scaleX(1.0181);">IN</div>
<div class="t" style="left:929.86px;top:574.40px;font-size:27.10px;line-height:27.10px;color:#000000;transform:scaleX(1.0049);">46092</div>
<div class="t" style="left:45.12px;top:612.40px;font-size:27.10px;line-height:27.10px;color:#000000;transform:scaleX(0.9452);">234 Raphaelle Villages Suite 388</div>
<div class="t" style="left:443.27px;top:612.40px;font-size:27.10px;line-height:27.10px;color:#000000;transform:scaleX(0.9651);">West Bernhardchester</div>
<div class="t" style="left:735.43px;top:612.40px;font-size:27.10px;line-height:27.10px;color:#000000;transform:scaleX(0.9074);">NY</div>
<div class="t" style="left:929.17px;top:612.40px;font-size:27.10px;line-height:27.10px;color:#000000;transform:scaleX(1.0105);">82513</div>
<div class="t" style="left:45.13px;top:650.40px;font-size:27.10px;line-height:27.10px;color:#000000;transform:scaleX(0.9403);">641 Keeling Vista</div>
<div class="t" style="left:443.27px;top:650.40px;font-size:27.10px;line-height:27.10px;color:#000000;transform:scaleX(0.9789);">Walterbury</div>
<div class="t" style="left:735.53px;top:650.40px;font-size:27.10px;line-height:27.10px;color:#000000;">NH</div>
<div class="t" style="left:929.16px;top:650.40px;font-size:27.10px;line-height:27.10px;color:#000000;transform:scaleX(1.0142);">92977</div>
<div class="t" style="left:45.23px;top:688.40px;font-size:27.10px;line-height:27.10px;color:#000000;transform:scaleX(0.9555);">8250 Albertha Glen Suite 325</div>
<div class="t" style="left:442.26px;top:688.40px;font-size:27.10px;line-height:27.10px;color:#000000;transform:scaleX(0.9868);">Noeside</div>
<div class="t" style="left:735.59px;top:688.40px;font-size:27.10px;line-height:27.10px;color:#000000;transform:scaleX(0.8900);">CA</div>
<div class="t" style="left:929.03px;top:688.40px;font-size:27.10px;line-height:27.10px;color:#000000;transform:scaleX(1.0142);">66339</div>
<div class="t" style="left:45.36px;top:726.40px;font-size:27.10px;line-height:27.10px;color:#000000;transform:scaleX(0.9576);">54996 Nick Fork Apt. 374</div>
<div class="t" style="left:442.75px;top:726.40px;font-size:27.10px;line-height:27.10px;color:#000000;transform:scaleX(1.0107);">Tillmantown</div>
<div class="t" style="left:735.45px;top:726.40px;font-size:27.10px;line-height:27.10px;color:#000000;transform:scaleX(0.8544);">KS</div>
<div class="t" style="left:929.30px;top:726.40px;font-size:27.10px;line-height:27.10px;color:#000000;transform:scaleX(1.0124);">52492</div>
<div class="t" style="left:45.36px;top:764.40px;font-size:27.10px;line-height:27.10px;color:#000000;transform:scaleX(0.9550);">3930 Mable Course</div>
<div class="t" style="left:442.37px;top:764.40px;font-size:27.10px;line-height:27.10px;color:#000000;transform:scaleX(0.9348);">Lake Felipe</div>
<div class="t" style="left:735.72px;top:764.40px;font-size:27.10px;line-height:27.10px;color:#000000;transform:scaleX(0.8862);">SD</div>
<div class="t" style="left:929.17px;top:764.40px;font-size:27.10px;line-height:27.10px;color:#000000;transform:scaleX(1.0105);">96878</div>
<div class="t" style="left:45.88px;top:802.40px;font-size:27.10px;line-height:27.10px;color:#000000;transform:scaleX(0.9527);">45136 Tyrel Courts Suite 835</div>
<div class="t" style="left:442.35px;top:802.40px;font-size:27.10px;line-height:27.10px;color:#000000;transform:scaleX(0.9461);">East Deshaun</div>
<div class="t" style="left:735.60px;top:802.40px;font-size:27.10px;line-height:27.10px;color:#000000;transform:scaleX(0.9708);">MN</div>
<div class="t" style="left:929.03px;top:802.40px;font-size:27.10px;line-height:27.10px;color:#000000;transform:scaleX(1.0124);">75053</div>
<div class="t" style="left:44.43px;top:840.40px;font-size:27.10px;line-height:27.10px;color:#000000;transform:scaleX(0.9679);">18222 Blick Fields Apt. 569</div>
<div class="t" style="left:442.27px;top:840.40px;font-size:27.10px;line-height:27.10px;color:#000000;transform:scaleX(0.9824);">Mableland</div>
<div class="t" style="left:736.50px;top:840.40px;font-size:27.10px;line-height:27.10px;color:#000000;transform:scaleX(0.8496);">AL</div>
<div class="t" style="left:929.31px;top:840.40px;font-size:27.10px;line-height:27.10px;color:#000000;transform:scaleX(1.0049);">54374</div>
<div class="t" style="left:45.89px;top:878.40px;font-size:27.10px;line-height:27.10px;color:#000000;transform:scaleX(0.9468);">41490 Stacey Loop</div>
<div class="t" style="left:442.17px;top:878.40px;font-size:27.10px;line-height:27.10px;color:#000000;transform:scaleX(1.0297);">Hillardmouth</div>
<div class="t" style="left:735.73px;top:878.40px;font-size:27.10px;line-height:27.10px;color:#000000;transform:scaleX(0.8767);">OR</div>
<div class="t" style="left:929.03px;top:878.40px;font-size:27.10px;line-height:27.10px;color:#000000;transform:scaleX(1.0124);">72418</div>
<div class="t" style="left:220.04px;top:1368.29px;font-size:28.12px;line-height:28.12px;color:#262626;font-weight:700;transform:scaleX(0.8955);">Sheet1</div>
<div class="t" style="left:354.12px;top:1373.94px;font-size:28.83px;line-height:28.83px;color:#ffffff;">record-list</div>
</body></html>
